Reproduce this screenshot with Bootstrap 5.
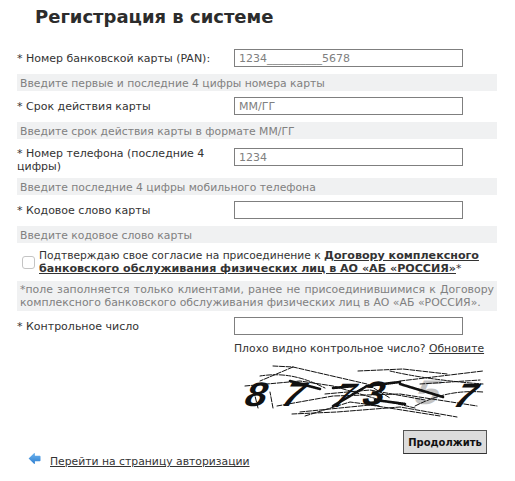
<!DOCTYPE html>
<html lang="ru">
<head>
<meta charset="utf-8">
<title>Регистрация в системе</title>
<link href="https://cdn.jsdelivr.net/npm/bootstrap@5.3.0/dist/css/bootstrap.min.css" rel="stylesheet">
<style>
body{font-family:"DejaVu Sans",Verdana,sans-serif;font-size:10.8px;line-height:13px;color:#333;background:#fff;overflow:hidden}
.reg-wrap{width:480px;margin-left:17px}
.reg-title{font-size:18px;line-height:22px;font-weight:700;color:#2c2c2c;margin:6px 0 0 18px;height:43px}
.reg-row{min-height:18px;margin-top:6px}
.reg-row:first-of-type{margin-top:0}
.reg-label{width:217px;flex:none;line-height:13px;font-size:11px}
.reg-input{width:229px;height:18px;border:1px solid #7f7f7f;padding:0 4px;font:11px "DejaVu Sans",sans-serif;color:#808080;background:#fff;border-radius:0;outline:0;display:block}
.reg-hint{background:#f0f1f2;color:#808080;padding:3px 3px 1px;line-height:13px;margin-top:7px;min-height:17px}
.reg-agree{padding-left:5px;margin-top:6px;height:32px;gap:4px;font-size:10.7px}
.reg-check{width:13px;height:13px;border:1px solid #c4c4c4;border-radius:3px;margin-top:7px;flex:none;appearance:none;background:#fff}
.reg-agree a,.reg-side a,.reg-back a{color:#333}
.reg-agree a{font-weight:700;font-size:11.1px}
.reg-note{margin-top:0;padding:2px 3px;line-height:13px;color:#808080;background:#f0f1f2;text-align:justify;height:30px;font-size:10.9px}
.reg-side{margin-left:217px;margin-top:7px;height:13px;white-space:nowrap}
.reg-captcha{display:block;margin:9px 0 0 223px;width:250px;height:60px}
.reg-submit{width:84px;height:24px;background:#dcdcdc;border:1px solid #555;border-bottom-color:#333;border-radius:0;font:700 10px "DejaVu Sans",sans-serif;color:#111;padding:0;margin:6px 10px 0 auto;display:block}
.reg-back{margin:-2px 0 0 11px;gap:9px;height:20px}
.reg-back a{margin-top:3px}
</style>
</head>
<body>
<div class="reg-wrap">
  <h1 class="reg-title">Регистрация в системе</h1>
  <form>
    <div class="reg-row d-flex align-items-center"><label class="reg-label">* Номер банковской карты (PAN):</label><input class="reg-input" value="1234__________5678"></div>
    <div class="reg-hint">Введите первые и последние 4 цифры номера карты</div>
    <div class="reg-row d-flex align-items-center"><label class="reg-label">* Срок действия карты</label><input class="reg-input" value="ММ/ГГ"></div>
    <div class="reg-hint">Введите срок действия карты в формате ММ/ГГ</div>
    <div class="reg-row d-flex"><label class="reg-label" style="margin-top:2px">* Номер телефона (последние 4 цифры)</label><input class="reg-input" style="margin-top:3px" value="1234"></div>
    <div class="reg-hint" style="margin-top:5px">Введите последние 4 цифры мобильного телефона</div>
    <div class="reg-row d-flex align-items-center"><label class="reg-label">* Кодовое слово карты</label><input class="reg-input"></div>
    <div class="reg-hint">Введите кодовое слово карты</div>
    <div class="reg-agree d-flex"><input type="checkbox" class="reg-check"><div>Подтверждаю свое согласие на присоединение к <a href="#">Договору комплексного банковского обслуживания физических лиц в АО «АБ «РОССИЯ»</a>*</div></div>
    <div class="reg-note">*поле заполняется только клиентами, ранее не присоединившимися к Договору комплексного банковского обслуживания физических лиц в АО «АБ «РОССИЯ».</div>
    <div class="reg-row d-flex align-items-center"><label class="reg-label">* Контрольное число</label><input class="reg-input"></div>
    <div class="reg-side">Плохо видно контрольное число? <a href="#">Обновите</a></div>
    <svg class="reg-captcha" viewBox="0 0 250 60" fill="none" stroke="#111" stroke-linecap="round">
      <g font-family="Liberation Sans,sans-serif" font-style="normal" font-weight="700" font-size="34" fill="#111" stroke="none">
        <text transform="translate(2 42) skewX(-20) scale(1.15 1)">8</text>
        <text transform="translate(38 42) skewX(-28) scale(1.1 1)" font-weight="700">7</text>
        <text transform="translate(88 43) skewX(-28) scale(1.1 1)" font-weight="400">7</text>
        <text transform="translate(120 41) skewX(-18) scale(1.15 1)">3</text>
        <text transform="translate(172 40) skewX(-20) scale(1.3 1)" opacity=".25">5</text>
        <text transform="translate(210 43) skewX(-28) scale(1.1 1)">7</text>
      </g>
      <g stroke-width="1" stroke-dasharray="5 1.5">
        <path d="M33 2L53 3L127 20L150 34"/><path d="M53 3L20 17"/>
        <path d="M118 7L163 5L207 10"/><path d="M160 17L243 7"/><path d="M150 7C180 14 215 18 243 20"/>
        <path d="M5 22L60 17L93 22L137 35L175 44"/><path d="M20 12C45 8 65 14 85 24"/>
        <path d="M52 50L97 48L160 43L217 53"/><path d="M37 42L93 32L160 30L237 42"/><path d="M60 48L130 41L200 52"/>
        <path d="M18 44L13 24M33 44L30 28"/><path d="M175 42C195 32 215 26 243 28"/>
        <path d="M65 52L110 38L140 42"/><path d="M85 30L130 26L185 36"/><path d="M180 20L240 16"/>
      </g>
      <g stroke-width="2.6" stroke-dasharray="1.2 .8">
        <path d="M50 17L80 25"/><path d="M93 24L115 22"/><path d="M93 42L127 22L160 18"/><path d="M160 20L203 33"/><path d="M135 36L165 40"/>
      </g>
    </svg>
    <button type="button" class="reg-submit">Продолжить</button>
    <div class="reg-back d-flex">
      <svg width="13" height="13" viewBox="0 0 13 13"><defs><linearGradient id="arrowFill" x1="0" y1="0" x2="0" y2="1"><stop offset="0" stop-color="#6db3ee"/><stop offset="1" stop-color="#2f7fd0"/></linearGradient></defs><path d="M.6 6.500 6 1.200c.5-.4.900 0 .900.500v2.100h4.600c.6 0 1 .4 1 1v3.400c0 .6-.4 1-1 1H6.900v2.100c0 .5-.4.900-.9.500z" fill="url(#arrowFill)"/></svg>
      <a href="#">Перейти на страницу авторизации</a>
    </div>
  </form>
</div>
<script src="https://cdn.jsdelivr.net/npm/bootstrap@5.3.0/dist/js/bootstrap.bundle.min.js"></script>
</body>
</html>
